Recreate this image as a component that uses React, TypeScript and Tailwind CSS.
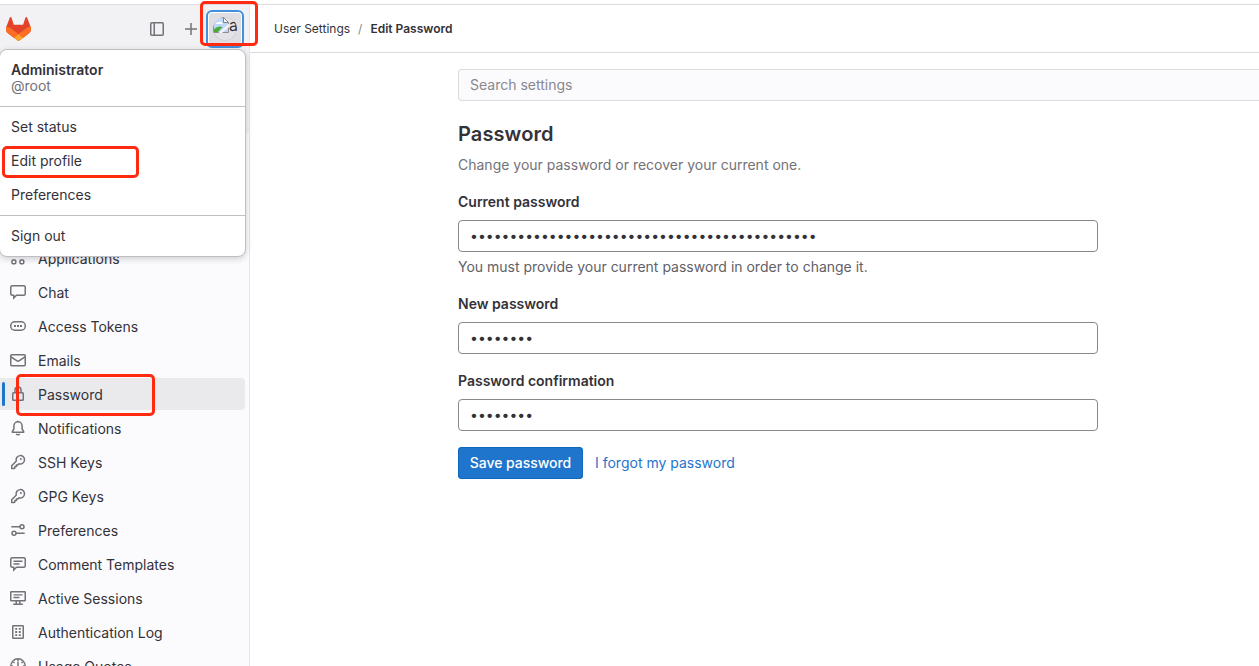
import type { ReactNode } from 'react';

function Icon({ children }: { children: ReactNode }) {
  return (
    <svg
      width="16"
      height="16"
      viewBox="0 0 16 16"
      fill="none"
      stroke="currentColor"
      strokeWidth="1.5"
      className="shrink-0 text-[#737278]"
    >
      {children}
    </svg>
  );
}

const keyIcon = (
  <Icon>
    <path d="M6.3 7.1A4.2 4.2 0 1 1 9 9.8L7.9 10.9H6.4v1.6H4.9v1.4l-.6.5H1.7v-2.6z" strokeLinejoin="round" />
    <circle cx="10.9" cy="5.1" r="1" fill="currentColor" stroke="none" />
  </Icon>
);

const navItems: { label: string; icon: ReactNode; active?: boolean }[] = [
  {
    label: 'Applications',
    icon: (
      <Icon>
        <rect x="2" y="2" width="3.75" height="3.75" rx="1" />
        <rect x="10" y="2" width="3.75" height="3.75" rx="1" />
        <rect x="2" y="10" width="3.75" height="3.75" rx="1" />
        <rect x="10" y="10" width="3.75" height="3.75" rx="1" />
      </Icon>
    ),
  },
  {
    label: 'Chat',
    icon: (
      <Icon>
        <path d="M2.25 1.75h11.5a1.5 1.5 0 0 1 1.5 1.5v6.5a1.5 1.5 0 0 1-1.5 1.5H6.5L3.75 14v-2.75h-1.5a1.5 1.5 0 0 1-1.5-1.5v-6.5a1.5 1.5 0 0 1 1.5-1.5z" />
      </Icon>
    ),
  },
  {
    label: 'Access Tokens',
    icon: (
      <Icon>
        <rect x=".75" y="3.75" width="14.5" height="8.5" rx="4" />
        <path d="M4 8h2M7 8h2M10 8h2" strokeWidth="1.8" />
      </Icon>
    ),
  },
  {
    label: 'Emails',
    icon: (
      <Icon>
        <rect x=".75" y="2.75" width="14.5" height="11" rx="1" />
        <path d="m1 4.8 6 4a1.8 1.8 0 0 0 2 0l6-4" />
      </Icon>
    ),
  },
  {
    label: 'Password',
    active: true,
    icon: (
      <Icon>
        <rect x="2.75" y="6.75" width="10.5" height="7.5" rx=".8" />
        <path d="M5 6.5V4a3 3 0 0 1 6 0v2.5M8 9.2v2.3" />
      </Icon>
    ),
  },
  {
    label: 'Notifications',
    icon: (
      <Icon>
        <path d="M8 1.8A4.1 4.1 0 0 0 3.9 5.9V9L2.3 11.6v.65h11.4v-.65L12.1 9V5.9A4.1 4.1 0 0 0 8 1.8z" strokeLinejoin="round" />
        <path d="M8 .8v1M6.3 13.8a2 2 0 0 0 3.4 0" />
      </Icon>
    ),
  },
  { label: 'SSH Keys', icon: keyIcon },
  { label: 'GPG Keys', icon: keyIcon },
  {
    label: 'Preferences',
    icon: (
      <Icon>
        <circle cx="12" cy="4.75" r="2" />
        <circle cx="4" cy="11.25" r="2" />
        <path d="M1.3 4.75H10M6 11.25h8.7" />
      </Icon>
    ),
  },
  {
    label: 'Comment Templates',
    icon: (
      <Icon>
        <path d="M2.25 1.75h11.5a1.5 1.5 0 0 1 1.5 1.5v6.5a1.5 1.5 0 0 1-1.5 1.5H6.5L3.75 14v-2.75h-1.5a1.5 1.5 0 0 1-1.5-1.5v-6.5a1.5 1.5 0 0 1 1.5-1.5z" />
        <path d="M3.5 5.25h9M3.5 8h6" strokeWidth="1.3" />
      </Icon>
    ),
  },
  {
    label: 'Active Sessions',
    icon: (
      <Icon>
        <rect x=".75" y="1.75" width="14.5" height="9" rx=".6" />
        <path d="M3.5 4.9h9M3.5 7.5h6" strokeWidth="1.3" />
        <path d="M6.25 11v3M9.75 11v3M3.2 14.25h9.6" />
      </Icon>
    ),
  },
  {
    label: 'Authentication Log',
    icon: (
      <Icon>
        <rect x="2.75" y="1.75" width="10.5" height="12.5" rx=".6" />
        <path d="M5.2 4.9h2M8.8 4.9h2M5.2 8h2M8.8 8h2M5.2 11.1h2M8.8 11.1h2" strokeWidth="1.8" />
      </Icon>
    ),
  },
  {
    label: 'Usage Quotas',
    icon: (
      <Icon>
        <circle cx="8" cy="8" r="7.2" />
        <path d="M8 3.5V9M8 1v2M3.5 4l1 1M12.5 4l-1 1M1 8h2M13 8h2" />
      </Icon>
    ),
  },
];

function Logo() {
  return (
    <svg width="25" height="24" viewBox="0 0 25 24">
      <path
        d="m24.507 9.5-.034-.09L21.082.562a.896.896 0 0 0-1.694.091l-2.29 7.01H7.825L5.535.653a.898.898 0 0 0-1.694-.09L.451 9.411.416 9.5a6.297 6.297 0 0 0 2.09 7.278l.012.01.03.022 5.16 3.867 2.56 1.935 1.554 1.176a1.051 1.051 0 0 0 1.268 0l1.555-1.176 2.56-1.935 5.197-3.89.014-.01A6.297 6.297 0 0 0 24.507 9.5Z"
        fill="#E24329"
      />
      <path
        d="m24.507 9.5-.034-.09a11.44 11.44 0 0 0-4.56 2.051l-7.447 5.632 4.742 3.584 5.197-3.89.014-.01A6.297 6.297 0 0 0 24.507 9.5Z"
        fill="#FC6D26"
      />
      <path
        d="m7.707 20.677 2.56 1.935 1.555 1.176a1.051 1.051 0 0 0 1.268 0l1.555-1.176 2.56-1.935-4.743-3.584-4.755 3.584Z"
        fill="#FCA326"
      />
      <path
        d="M5.01 11.461a11.43 11.43 0 0 0-4.56-2.05L.416 9.5a6.297 6.297 0 0 0 2.09 7.278l.012.01.03.022 5.16 3.867 4.745-3.584-7.444-5.632Z"
        fill="#FC6D26"
      />
    </svg>
  );
}

function AvatarButton() {
  return (
    <button className="flex h-[38px] w-[38px] items-center justify-center rounded-[6px] border-2 border-[#428fdc] bg-white p-px">
      <span className="flex h-full w-full items-center justify-center rounded-[3px] bg-[#dfdfe3]">
        <span className="flex h-6 w-6 overflow-hidden rounded-full bg-[#e4e4e8] ring-1 ring-[#d2d2d6] ring-inset">
          <svg width="16" height="16" viewBox="0 0 16 16" className="shrink-0">
            <path d="M.5.5H11L15.5 5v10.500H.5z" fill="#bdd8f8" />
            <path d="M3 7a1.800 1.800 0 0 1 2.500-1.700A2.300 2.300 0 0 1 9.500 7z" fill="#fff" />
            <path d="M.5 15.500v-2.500C3 10 6 8.500 9.500 10l-5 5.500z" fill="#4eaa3a" />
            <path d="M10.500.5V5.500h5z" fill="#fff" stroke="#77777c" strokeWidth=".9" />
            <path d="M.5 15.500V.5h10M15.500 5.500v10H.5" fill="none" stroke="#8c8c92" />
            <path d="M16 6.500 5.500 16H9l7-6z" fill="#f4f4f7" />
          </svg>
          <span className="text-base leading-[17px] text-[#333238]">a</span>
        </span>
      </span>
    </button>
  );
}

function Sidebar() {
  return (
    <aside className="flex w-[250px] shrink-0 flex-col overflow-hidden border-r border-[#e7e7ea] bg-[#fbfafd]">
      <div className="h-[128px] shrink-0 bg-[#f2f2f4]">
        <div className="flex h-12 items-center pl-[6px]">
          <Logo />
          <div className="ml-[118px] flex items-center">
            <Icon>
              <rect x="1.75" y="1.75" width="12.5" height="12.5" rx="1" />
              <path d="M5.25 2v12" />
            </Icon>
            <div className="ml-[18px] flex">
              <Icon>
                <path d="M8 2v12M2 8h12" />
              </Icon>
            </div>
          </div>
          <div className="ml-[7px]">
            <AvatarButton />
          </div>
        </div>
      </div>
      <nav className="mt-[109px] flex flex-col gap-[2px] pr-1">
        {navItems.map((item) => (
          <a
            key={item.label}
            className={
              item.active
                ? 'flex h-8 shrink-0 items-center rounded-r bg-[#eaeaed] pl-[2px]'
                : 'flex h-8 shrink-0 items-center pl-[2px]'
            }
          >
            <span className={item.active ? 'h-6 w-[3px] rounded-[2px] bg-[#1f75cb]' : 'w-[3px]'} />
            <span className="ml-[5px]">{item.icon}</span>
            <span className="ml-3 pt-px">{item.label}</span>
          </a>
        ))}
      </nav>
    </aside>
  );
}

function UserMenu() {
  return (
    <div className="absolute top-[49px] left-[-1px] flex h-[208px] w-[247px] flex-col rounded-lg border border-[#bfbfc3] bg-white shadow-[0_2px_6px_rgba(31,30,36,0.2)]">
      <div className="h-[57px] border-b border-[#bfbfc3] pt-3 pl-[11px] leading-4">
        <div className="font-semibold">Administrator</div>
        <div className="text-[#737278]">@root</div>
      </div>
      <div className="flex h-[109px] flex-col gap-[2px] border-b border-[#bfbfc3] pt-1 pl-[11px] leading-8">
        <div>Set status</div>
        <div>Edit profile</div>
        <div>Preferences</div>
      </div>
      <div className="pt-1 pl-[11px] leading-8">Sign out</div>
    </div>
  );
}

function PasswordField({ label, length, hint }: { label: string; length: number; hint?: string }) {
  return (
    <div>
      <label className="block h-5 leading-5 font-semibold">{label}</label>
      <input
        type="password"
        readOnly
        defaultValue={'x'.repeat(length)}
        className="mt-2 block h-8 w-[640px] rounded border border-[#89888d] bg-white px-[11px] pb-[2px] outline-none"
      />
      {hint && <p className="mt-1 h-[22px] leading-[22px] text-[#626168]">{hint}</p>}
    </div>
  );
}

export default function App() {
  return (
    <div className="relative flex h-[666px] w-full flex-col overflow-hidden bg-white pt-1 font-[Inter,'Noto_Sans',sans-serif] text-sm text-[#333238]">
      <div className="flex min-h-0 grow border-t border-[#dcdcde]">
        <Sidebar />
        <div className="flex min-w-0 grow flex-col">
          <header className="flex h-12 shrink-0 items-center border-b border-[#dcdcde] pl-6 text-xs">
            <span>User Settings</span>
            <span className="mx-2 text-[#89888d]">/</span>
            <span className="font-semibold">Edit Password</span>
          </header>
          <main className="pt-4 pl-[208px]">
            <div className="h-8 rounded-l border border-r-0 border-[#dcdcde] bg-[#fbfafd] pl-[11px] leading-[30px] text-[#89888d]">
              Search settings
            </div>
            <h1 className="mt-[19px] h-7 text-xl leading-7 font-semibold tracking-[0.1px]">Password</h1>
            <p className="mt-[7px] leading-5 text-[#737278]">Change your password or recover your current one.</p>
            <form className="mt-[17px] flex flex-col">
              <PasswordField
                label="Current password"
                length={44}
                hint="You must provide your current password in order to change it."
              />
              <div className="mt-4">
                <PasswordField label="New password" length={8} />
              </div>
              <div className="mt-[17px]">
                <PasswordField label="Password confirmation" length={8} />
              </div>
              <div className="mt-4 flex items-center gap-3">
                <button
                  type="button"
                  className="h-8 w-[125px] rounded bg-[#1f75cb] font-medium tracking-[-0.05px] text-white ring-1 ring-[#1068bf] ring-inset"
                >
                  Save password
                </button>
                <a className="text-[#1f75cb]">I forgot my password</a>
              </div>
            </form>
          </main>
        </div>
      </div>
      <UserMenu />
      <div className="absolute top-[1px] left-[200px] h-[45px] w-[58px] rounded-[5px] border-3 border-[#ff2a10]" />
      <div className="absolute top-[146px] left-[2px] h-8 w-[137px] rounded-[5px] border-3 border-[#ff2a10]" />
      <div className="absolute top-[374px] left-[16px] h-[42px] w-[139px] rounded-[5px] border-3 border-[#ff2a10]" />
    </div>
  );
}
